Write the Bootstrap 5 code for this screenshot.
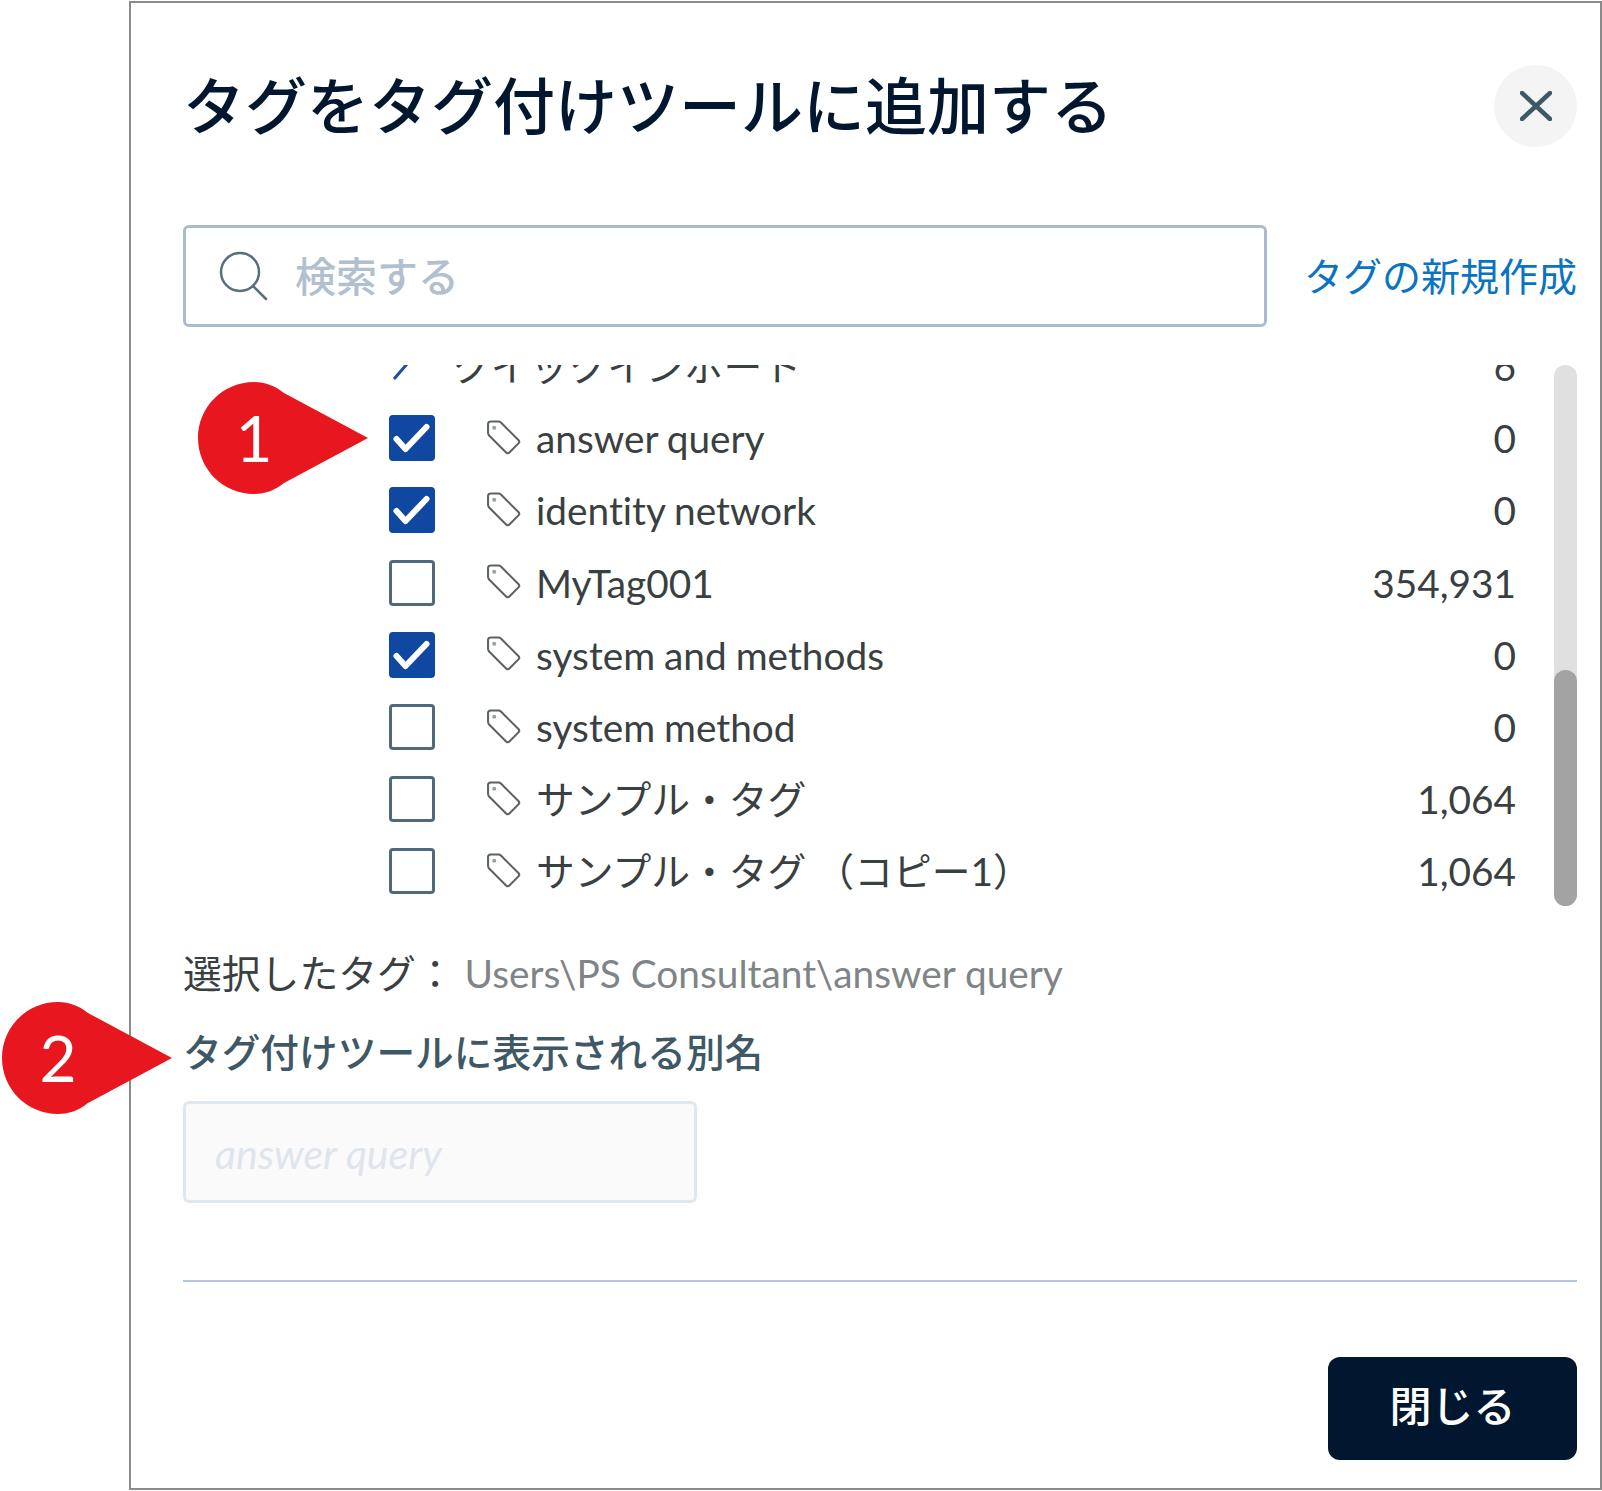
<!DOCTYPE html>
<html lang="ja">
  <head>
    <title>タグをタグ付けツールに追加する</title>
    <meta charset="utf-8" />
    <meta name="viewport" content="width=device-width, initial-scale=1" />
    <link href="https://cdn.jsdelivr.net/npm/bootstrap@5.3.2/dist/css/bootstrap.min.css" rel="stylesheet" />
    <style>
      body { margin: 0; background: #fff; font-family: Lato, "Noto Sans CJK JP", sans-serif; color: #3a3f42; font-variant-ligatures: none; }
      .tag-panel { position: relative; margin: 1px 0 0 129px; width: 1473px; height: 1489px; border: 2px solid #8a8a8a; padding: 62px 23px 0 52px; }
      .panel-title { font-size: 62px; line-height: 82px; margin: 0; color: #01172f; font-weight: 500; }
      .close-circle { width: 83px; height: 82px; border: 0; padding: 0; background: #f4f4f4; }
      .search-row { margin-top: 78px; }
      .search-box { width: 1084px; height: 102px; border: 3px solid #a9bccf; border-radius: 6px; padding-left: 32px; }
      .search-box input { border: 0; outline: 0; background: transparent; box-shadow: none; font-size: 41px; font-weight: 500; padding: 0 0 0 27px; height: 90px; color: #3a3f42; }
      .search-box input::placeholder { color: #b0c0cf; }
      .new-tag { color: #0b74c0; font-size: 39px; text-decoration: none; line-height: 1; }
      .list-wrap { margin-top: 38px; height: 541px; }
      .list-clip { overflow: hidden; height: 541px; }
      .list-inner { margin-top: -35px; padding-left: 206px; padding-right: 38px; }
      .tag-row { height: 72.2px; font-size: 38.8px; word-spacing: -1px; color: #3a3f42; }
      .tick-slot { width: 46px; height: 46px; flex: none; margin-right: 51px; }
      .tick-slot .form-check-input { width: 46px; height: 46px; margin: 0; border: 3px solid #4f6a78; border-radius: 4px; display: block; }
      .tick-slot .form-check-input:checked { background-color: #0f47a1; border-color: #0f47a1; background-size: 46px 46px;
        background-image: url("data:image/svg+xml,%3csvg xmlns='http://www.w3.org/2000/svg' viewBox='0 0 46 46'%3e%3cpath fill='none' stroke='%23fff' stroke-width='6' stroke-linecap='round' stroke-linejoin='round' d='M7.5 24l9 10 21-22'/%3e%3c/svg%3e"); }
      .tag-glyph { width: 35px; height: 35px; flex: none; margin-right: 15px; margin-top: -2px; }
      .first-name { margin-left: -34px; }
      .tag-count { margin-left: auto; }
      .scroll-track { position: relative; width: 23px; height: 541px; flex: none; background: #e0e0e0; border-radius: 12px; margin-left: auto; }
      .scroll-thumb { position: absolute; left: 0; right: 0; bottom: 0; height: 236px; background: #a3a3a3; border-radius: 12px; }
      .picked-line { margin-top: 42px; font-size: 38.8px; line-height: 50px; color: #3a3f42; }
      .picked-path { color: #7f8487; margin-left: 10px; }
      .alias-label { margin-top: 29px; font-size: 38.7px; font-weight: 500; line-height: 50px; color: #3f5866; }
      .alias-input { margin-top: 24px; width: 514px; height: 102px; background: #fafafa; border: 3px solid #e1e7ee; border-radius: 6px; padding: 0 29px; font-size: 41px; font-style: italic; line-height: 100px; color: #dfe5ec; }
      .foot-rule { margin: 77px 0 0; border: 0; border-top: 2px solid #b6c8d8; opacity: 1; }
      .close-btn { margin-top: 75px; width: 249px; height: 103px; padding: 0 0 4px; background: #01172f; color: #fff; font-size: 42px; font-weight: 500; border: 0; border-radius: 12px; }
      .callout { position: absolute; width: 170px; height: 112px; }
      .callout svg { position: absolute; inset: 0; }
      .callout span { position: absolute; left: 0; width: 112px; top: 0; line-height: 112px; text-align: center; color: #fff; font-size: 64px; }
      .callout-one { left: 198px; top: 382px; }
      .callout-two { left: 2px; top: 1002px; }
    </style>
    <script src="https://cdn.jsdelivr.net/npm/bootstrap@5.3.2/dist/js/bootstrap.bundle.min.js"></script>
  </head>
  <body>
    <svg width="0" height="0" class="d-block">
      <symbol id="tagicon" viewBox="0 0 34 34">
        <path d="M2 4c0-1.500 1-2.500 2.500-2.500L12 1.500c1 0 1.800.3 2.500 1L31.500 19.500c1 1 1 2.200 0 3.200L22.700 31.500c-1 1-2.200 1-3.200 0L3 15c-.7-.7-1-1.500-1-2.500Z" fill="none" stroke="#5c6266" stroke-width="2"/>
        <circle cx="8" cy="7.500" r="2" fill="#9aa0a4"/>
      </symbol>
    </svg>

    <div class="tag-panel">
      <div class="d-flex align-items-center justify-content-between">
        <h1 class="panel-title">タグをタグ付けツールに追加する</h1>
        <button class="close-circle rounded-circle d-flex align-items-center justify-content-center" type="button">
          <svg width="32" height="30" viewBox="0 0 32 30"><path d="M2 2l28 26M30 2L2 28" stroke="#3f5866" stroke-width="4.500" stroke-linecap="round"/></svg>
        </button>
      </div>

      <div class="search-row d-flex align-items-center justify-content-between">
        <div class="search-box d-flex align-items-center">
          <svg width="50" height="50" viewBox="0 0 50 50" class="flex-shrink-0">
            <circle cx="22" cy="21" r="19" fill="none" stroke="#5a6e78" stroke-width="2.500"/>
            <path d="M35 35l13 13" stroke="#5a6e78" stroke-width="2.500" stroke-linecap="round"/>
          </svg>
          <input class="form-control" type="text" placeholder="検索する" />
        </div>
        <a class="new-tag" href="#">タグの新規作成</a>
      </div>

      <div class="list-wrap d-flex">
        <div class="list-clip flex-grow-1">
          <div class="list-inner" id="tag_list"></div>
        </div>
        <div class="scroll-track"><div class="scroll-thumb"></div></div>
      </div>

      <div class="picked-line">選択したタグ：<span class="picked-path">Users\PS Consultant\answer query</span></div>
      <div class="alias-label">タグ付けツールに表示される別名</div>
      <div class="alias-input">answer query</div>
      <hr class="foot-rule" />
      <div class="d-flex justify-content-end">
        <button class="close-btn" type="button">閉じる</button>
      </div>
    </div>

    <div class="callout callout-one">
      <svg width="170" height="112" viewBox="0 0 170 112"><path d="M56 0c12 0 21 4 30 11l84 45-84 45c-9 7-18 11-30 11C25 112 0 87 0 56S25 0 56 0Z" fill="#e8171f"/></svg>
      <span>1</span>
    </div>
    <div class="callout callout-two">
      <svg width="170" height="112" viewBox="0 0 170 112"><path d="M56 0c12 0 21 4 30 11l84 45-84 45c-9 7-18 11-30 11C25 112 0 87 0 56S25 0 56 0Z" fill="#e8171f"/></svg>
      <span>2</span>
    </div>

    <script>
      var tags = [
        { name: "answer query", count: "0", checked: true },
        { name: "identity network", count: "0", checked: true },
        { name: "MyTag001", count: "354,931", checked: false },
        { name: "system and methods", count: "0", checked: true },
        { name: "system method", count: "0", checked: false },
        { name: "サンプル・タグ", count: "1,064", checked: false },
        { name: "サンプル・タグ （コピー1）", count: "1,064", checked: false },
      ];

      var html =
        '<div class="tag-row d-flex align-items-center">' +
        '<div class="tick-slot"><svg width="46" height="46" viewBox="0 0 46 46" class="d-block"><path d="M5 36l13-15" stroke="#1a4fa8" stroke-width="3"/></svg></div>' +
        '<span class="first-name">クイックインポート</span><span class="tag-count">6</span></div>';

      for (let i = 0; i < tags.length; i++) {
        html +=
          '<div class="tag-row d-flex align-items-center">' +
          '<div class="tick-slot"><input class="form-check-input" type="checkbox"' + (tags[i].checked ? " checked" : "") + " /></div>" +
          '<svg class="tag-glyph"><use href="#tagicon"></use></svg>' +
          "<span>" + tags[i].name + "</span>" +
          '<span class="tag-count">' + tags[i].count + "</span></div>";
      }
      document.getElementById("tag_list").innerHTML = html;
    </script>
  </body>
</html>
